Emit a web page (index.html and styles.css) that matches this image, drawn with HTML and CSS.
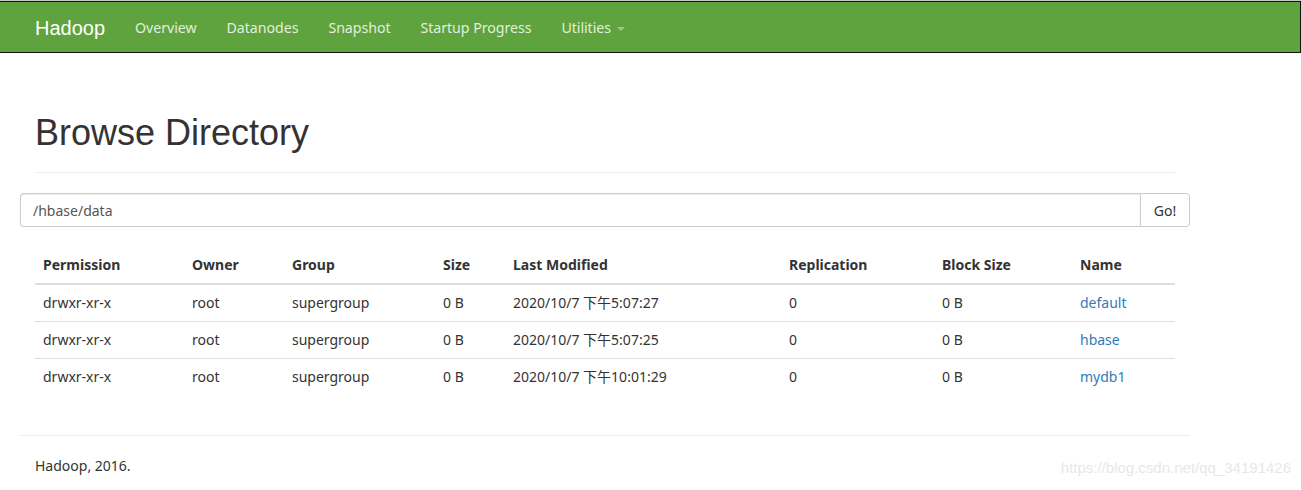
FILE: index.html
```
<!DOCTYPE html>
<html lang="en">
<head>
  <meta charset="UTF-8">
  <title>Browsing HDFS</title>
  <link rel="stylesheet" href="styles.css">
</head>
<body>
  <header class="navbar">
    <div class="navbar-inner">
      <a class="brand" href="#">Hadoop</a>
      <ul class="nav">
        <li><a href="#">Overview</a></li>
        <li><a href="#">Datanodes</a></li>
        <li><a href="#">Snapshot</a></li>
        <li><a href="#">Startup Progress</a></li>
        <li><a href="#">Utilities <span class="caret"></span></a></li>
      </ul>
    </div>
  </header>

  <div class="container">
    <div class="page-header">
      <h1>Browse Directory</h1>
    </div>

    <form class="input-group">
      <input type="text" class="form-control" value="/hbase/data">
      <button type="button" class="btn">Go!</button>
    </form>

    <div class="panel">
      <table class="table">
        <thead>
          <tr>
            <th>Permission</th>
            <th>Owner</th>
            <th>Group</th>
            <th>Size</th>
            <th>Last Modified</th>
            <th>Replication</th>
            <th>Block Size</th>
            <th>Name</th>
          </tr>
        </thead>
        <tbody>
          <tr>
            <td>drwxr-xr-x</td>
            <td>root</td>
            <td>supergroup</td>
            <td>0 B</td>
            <td>2020/10/7 下午5:07:27</td>
            <td>0</td>
            <td>0 B</td>
            <td><a href="#">default</a></td>
          </tr>
          <tr>
            <td>drwxr-xr-x</td>
            <td>root</td>
            <td>supergroup</td>
            <td>0 B</td>
            <td>2020/10/7 下午5:07:25</td>
            <td>0</td>
            <td>0 B</td>
            <td><a href="#">hbase</a></td>
          </tr>
          <tr>
            <td>drwxr-xr-x</td>
            <td>root</td>
            <td>supergroup</td>
            <td>0 B</td>
            <td>2020/10/7 下午10:01:29</td>
            <td>0</td>
            <td>0 B</td>
            <td><a href="#">mydb1</a></td>
          </tr>
        </tbody>
      </table>
    </div>

    <hr>
    <footer>
      <p>Hadoop, 2016.</p>
    </footer>
  </div>

  <div class="watermark">https://blog.csdn.net/qq_34191426</div>
</body>
</html>
```

FILE: styles.css
```
html {
  background: #fff;
}
body {
  margin: 0;
  border-top: 1px solid #c8c8c8;
  font-family: "Noto Sans", "Noto Sans CJK SC", sans-serif;
  font-size: 14px;
  line-height: 20px;
  color: #333;
  position: relative;
  min-height: 489px;
}
a {
  color: #337ab7;
  text-decoration: none;
}

/* top bar */
.navbar {
  background-color: #5fa33e;
  border-top: 1px solid #111;
  border-bottom: 1px solid #111;
  border-right: 1px solid #111;
  height: 50px;
}
.navbar-inner {
  display: flex;
  align-items: center;
  box-sizing: border-box;
  height: 50px;
  padding: 2px 0 0 20px;
}
.brand {
  font-family: "Liberation Sans", Arial, sans-serif;
  font-size: 20px;
  color: #fff;
  padding: 0 15px;
  line-height: 48px;
}
.nav {
  display: flex;
  list-style: none;
  margin: 0;
  padding: 0;
}
.nav a {
  display: block;
  padding: 0 15px;
  line-height: 48px;
  color: #e4eedf;
  font-size: 14.2px;
  letter-spacing: -0.05px;
}
.caret {
  display: inline-block;
  width: 0;
  height: 0;
  margin-left: 2px;
  vertical-align: middle;
  border-top: 4px solid #9cc786;
  border-left: 4px solid transparent;
  border-right: 4px solid transparent;
}

/* content */
.container {
  width: 1170px;
  margin-left: 5px;
  padding: 0 15px;
}
.page-header {
  margin: 60px 15px 20px;
  padding-bottom: 9px;
  border-bottom: 1px solid #eee;
}
.page-header h1 {
  margin: 0 0 10px;
  font-family: "Liberation Sans", Arial, sans-serif;
  font-weight: 400;
  font-size: 36px;
  line-height: 40px;
  color: #333;
}

.input-group {
  display: flex;
  margin: 0;
}
.form-control {
  flex: 1;
  height: 34px;
  box-sizing: border-box;
  padding: 6px 12px;
  font-family: inherit;
  font-size: 14px;
  color: #555;
  border: 1px solid #ccc;
  border-right: 0;
  border-radius: 4px 0 0 4px;
  box-shadow: inset 0 1px 1px rgba(0, 0, 0, .075);
  outline: none;
}
.btn {
  width: 50px;
  height: 34px;
  box-sizing: border-box;
  padding: 6px 0;
  font-family: inherit;
  font-size: 14px;
  color: #333;
  background: #fff;
  border: 1px solid #ccc;
  border-radius: 0 4px 4px 0;
}

.panel {
  padding: 20px 15px 0;
}
.table {
  width: 100%;
  border-collapse: collapse;
  table-layout: fixed;
}
.table th,
.table td {
  padding: 8px;
  text-align: left;
  line-height: 20px;
  vertical-align: top;
  white-space: nowrap;
}
.table th {
  font-weight: 700;
  border-bottom: 2px solid #ddd;
}
.table td {
  border-top: 1px solid #ddd;
}
.table th:nth-child(1) { width: 133px; }
.table th:nth-child(2) { width: 84px; }
.table th:nth-child(3) { width: 135px; }
.table th:nth-child(4) { width: 54px; }
.table th:nth-child(5) { width: 260px; }
.table th:nth-child(6) { width: 137px; }
.table th:nth-child(7) { width: 122px; }

hr {
  margin: 40px 0 20px;
  border: 0;
  border-top: 1px solid #eee;
}
footer p {
  margin: 0;
  padding: 0 15px;
  line-height: 20px;
}

.watermark {
  position: absolute;
  right: 10px;
  bottom: 12px;
  font-family: "Liberation Sans", Arial, sans-serif;
  font-size: 15px;
  color: #e8e8e8;
}
```
